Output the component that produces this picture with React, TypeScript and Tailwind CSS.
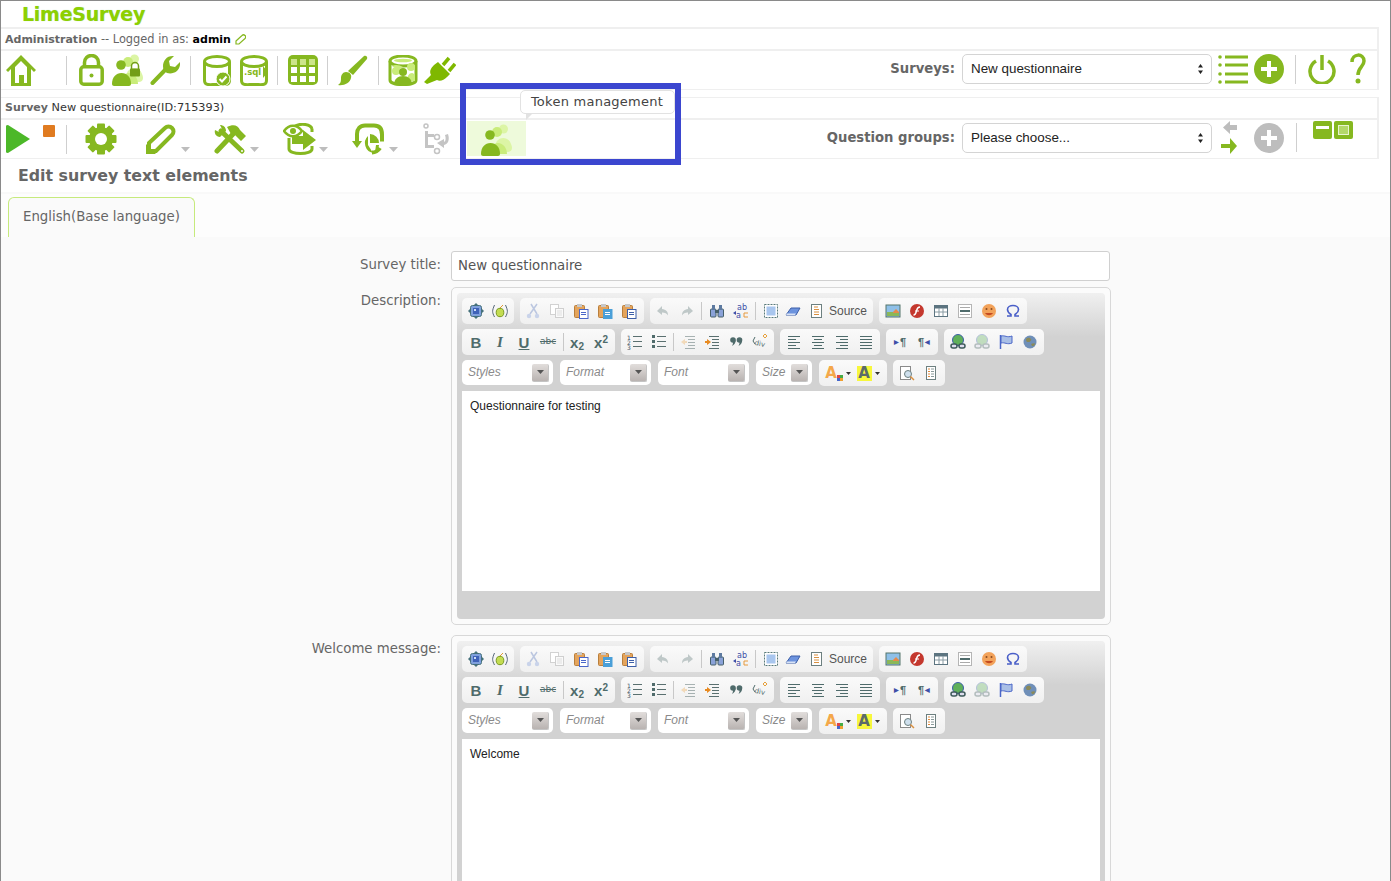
import React from "react";

const G = "#86b820";
const L = "#c9ec7a";
const P = "#dcf5a5";

type SP = { className?: string };
const Svg = ({ w, h, vb, className, children }: { w: number; h: number; vb?: string; className?: string; children: React.ReactNode }) => (
  <svg width={w} height={h} viewBox={vb ?? `0 0 ${w} ${h}`} className={"shrink-0 " + (className ?? "")}>{children}</svg>
);

const Sep = ({ className }: SP) => <div className={"w-px h-[29px] bg-[#cfcfcf] shrink-0 " + (className ?? "")} />;
const Caret = ({ className }: SP) => (
  <Svg w={9} h={5} className={"self-end mb-[6px] " + (className ?? "")}><path d="M0 0h9L4.500 5z" fill="#bdbdbd" /></Svg>
);

const Home = ({ className }: SP) => (
  <Svg w={32} h={32} className={className}>
    <path d="M16 1 31 16l-2 2-3-3v17H6V15l-3 3-2-2z M16 7 10 13v16h4v-8h5v8h3V13z" fill={G} fillRule="evenodd" />
  </Svg>
);
const Lock = ({ className }: SP) => (
  <Svg w={25} h={32} className={className}>
    <path d="M5.500 13V8.500a7 7 0 0 1 14 0V13" fill="none" stroke={G} strokeWidth="3.500" />
    <rect x="1.800" y="12.800" width="21.400" height="17.400" rx="3" fill="none" stroke={G} strokeWidth="3.500" />
    <circle cx="12.500" cy="21.500" r="2" fill={G} />
  </Svg>
);
const People = ({ className, lock }: SP & { lock?: boolean }) => (
  <Svg w={32} h={32} className={className}>
    <circle cx="22.500" cy="5" r="4.500" fill={P} />
    <path d="M16 27a8 8 0 1 1 14-7c2 4 1 8-3 8z" fill={P} />
    <circle cx="16" cy="8" r="5" fill={L} />
    <path d="M9 30c0-6 3-11 8-11s9 5 9 11z" fill={L} />
    <circle cx="9" cy="11" r="4.800" fill={G} />
    <path d="M0 30c0-7 4-11 9.500-11S19 23 19 30c0 1-1 2-2 2H2c-1 0-2-1-2-2z" fill={G} />
    {lock && (
      <g>
        <path d="M19.500 15v-3a3.500 3.500 0 0 1 7 0v3" fill="none" stroke="#739e18" strokeWidth="1.500" />
        <rect x="18" y="14.500" width="10" height="8" rx="1" fill="#739e18" />
      </g>
    )}
  </Svg>
);
const Wrench = ({ className }: SP) => (
  <Svg w={30} h={31} className={className}>
    <path d="M2.500 28 16 14" stroke={G} strokeWidth="4" strokeLinecap="round" />
    <path d="M14 16C11 9 15 0 24 1L19 6l1 5 5 1 5-5c1 8-6 13-13 11z" fill={G} />
  </Svg>
);
const Drum = ({ children, className }: { children?: React.ReactNode } & SP) => (
  <Svg w={28} h={31} className={className}>
    <path d="M1.500 7v18c0 6 4 4.500 12.500 4.500S26.500 31 26.500 25V7" fill="none" stroke={G} strokeWidth="3" />
    <ellipse cx="14" cy="6.500" rx="12.500" ry="5" fill="none" stroke={G} strokeWidth="3" />
    {children}
  </Svg>
);
const Grid3 = ({ className }: SP) => (
  <Svg w={30} h={30} className={className}>
    <rect width="30" height="30" rx="5" fill={G} />
    {[3, 12, 21].map((x) => [4, 12, 21].map((y) => (
      <rect key={x + "-" + y} x={x} y={y} width="6" height="6" fill={y === 4 ? "#cce58a" : "#fff"} />
    )))}
  </Svg>
);
const Brush = ({ className }: SP) => (
  <Svg w={30} h={31} className={className}>
    <path d="M26 1c2-1 4 1 3 3L15 20l-5-4z" fill={G} />
    <path d="M8 17c4 0 6 3 5 6-1 5-7 8-13 7 3-2 3-4 3-7 0-3 2-6 5-6z" fill={G} />
  </Svg>
);
const DbPeople = ({ className }: SP) => (
  <Svg w={30} h={31} className={className}>
    <path d="M2 6v19c0 6 26 6 26 0V6" fill="#fff" stroke={G} strokeWidth="3" />
    <ellipse cx="15" cy="6" rx="13" ry="5" fill="#fff" stroke={G} strokeWidth="3" />
    <ellipse cx="15" cy="5.500" rx="9" ry="1.800" fill={L} />
    <circle cx="23" cy="12" r="4" fill={L} />
    <circle cx="8" cy="16" r="4" fill={L} />
    <path d="M4 11c3-2 8-1 11 1l-5 3z" fill={L} />
    <path d="M19 27c0-6 2-9 5-9s3 4 3 8z" fill={L} />
    <circle cx="15" cy="17" r="4" fill={G} />
    <path d="M6 30c0-6 4-9 9-9s9 3 9 9c-5 1-13 1-18 0z" fill={G} />
  </Svg>
);
const Plug = ({ className }: SP) => (
  <Svg w={32} h={28} className={className}>
    <path d="M0 26 7 19C5 15 7 12 10 9L14 6 26 18l-3 3c-3 3-7 5-10 3l-10 4z" fill="#7fb800" />
    <path d="M19 9 25 2M25 15 31 8" stroke="#7fb800" strokeWidth="3.500" fill="none" />
  </Svg>
);
const ListIcon = ({ className }: SP) => (
  <Svg w={30} h={29} className={className}>
    {[2, 10, 19, 27].map((y) => <circle key={y} cx="2" cy={y} r="1.800" fill={G} />)}
    {[2, 10, 19, 27].map((y) => <rect key={"r" + y} x="7" y={y - 1.500} width="23" height="3" fill={G} />)}
  </Svg>
);
const PlusCircle = ({ c = G, className }: SP & { c?: string }) => (
  <Svg w={30} h={30} className={className}>
    <circle cx="15" cy="15" r="15" fill={c} />
    <path d="M13 7h4v6h6v4h-6v6h-4v-6H7v-4h6z" fill="#fff" />
  </Svg>
);
const Power = ({ className }: SP) => (
  <Svg w={28} h={30} className={className}>
    <path d="M8 7a12 12 0 1 0 12 0" fill="none" stroke={G} strokeWidth="3.500" />
    <path d="M14 1v15" stroke={G} strokeWidth="3.500" />
  </Svg>
);
const Help = ({ className }: SP) => (
  <Svg w={16} h={32} className={className}>
    <path d="M2 9c0-9 12-9 12-1 0 6-6 6-6 14" fill="none" stroke={G} strokeWidth="3.500" />
    <circle cx="8" cy="28" r="2.500" fill={G} />
  </Svg>
);
const Play = ({ className }: SP) => (
  <Svg w={24} h={28} className={className}><path d="M0 1q0-1 2-1l22 14L2 28q-2 0-2-1z" fill="#4cb828" /></Svg>
);
const Gear = ({ className }: SP) => (
  <Svg w={32} h={32} className={className}>
    {[0, 45, 90, 135].map((a) => <rect key={a} x="12" y="0.500" width="8" height="31" rx="1" fill={G} transform={`rotate(${a} 16 16)`} />)}
    <circle cx="16" cy="16" r="12" fill={G} />
    <circle cx="16" cy="16" r="6" fill="#fff" />
  </Svg>
);
const Pencil = ({ className }: SP) => (
  <Svg w={30} h={30} className={className}>
    <path d="M3 19 19 4c2-2 5-2 7 0s2 5 0 7L10 27H3z" fill="none" stroke={G} strokeWidth="4" />
    <path d="M0 20v10h10z" fill={G} />
  </Svg>
);
const Tools = ({ className }: SP) => (
  <Svg w={32} h={31} className={className}>
    <path d="M7 7 28 27" stroke={G} strokeWidth="5" strokeLinecap="round" />
    <path d="M1 6c-1 3 1 7 5 7l6-6c0-4-3-6-6-6L8 5 5 8z" fill={G} />
    <path d="M3 27 20 9" stroke={G} strokeWidth="5" strokeLinecap="round" />
    <path d="M13 3c6-3 11-2 13 3l6 6-5 5-6-6-4-1z" fill={G} />
    <circle cx="28" cy="27" r="1" fill="#fff" />
  </Svg>
);
const DbEye = ({ className }: SP) => (
  <Svg w={33} h={32} className={className}>
    <path d="M6 15v11c0 6 23 6 23 0v-3M29 9V6" fill="none" stroke={G} strokeWidth="3" />
    <path d="M1 8c5-7 13-7 18 0-5 7-13 7-18 0z" fill="#fff" stroke={G} strokeWidth="2.500" />
    <circle cx="10" cy="8" r="3" fill={G} />
    <path d="M12 3c6-3 16-2 17 3" fill="none" stroke={G} strokeWidth="3" />
    <path d="M9 13h11V7l13 10-13 10v-6H9z" fill={G} />
  </Svg>
);
const ChartIcon = ({ className }: SP) => (
  <Svg w={32} h={32} className={className}>
    <path d="M5 20V11C5 6 8 2.500 13 2.500h9c6 0 8 4 8 9v7M28 25c-2 3-5 4.500-8 4.500" fill="none" stroke={G} strokeWidth="4" />
    <path d="M0 18h10l-5 7z" fill={G} />
    <path d="M18 11v9h9a9 9 0 0 0-9-9z M16 13v9l5 8a10 10 0 0 1-5-17z M24 22l3 0a9 9 0 0 1-4 7z" fill={G} />
  </Svg>
);
const Tree = ({ className }: SP) => (
  <Svg w={27} h={32} className={className}>
    <g fill="none" stroke="#c4c4c4" strokeWidth="1.500">
      <circle cx="3" cy="3" r="2" />
      <circle cx="14" cy="14" r="2.500" />
      <circle cx="14" cy="28" r="2.500" />
    </g>
    <path d="M2 8h3v3h6v3H5v8h6v3H2z" fill="#c4c4c4" />
    <path d="M25 11c2 6 0 10-4 11v3l-7-5 7-4v3c2-1 2-4 1-7z" fill="#c4c4c4" />
  </Svg>
);
const Arrows = () => (
  <Svg w={17} h={33}>
    <path d="M9 0 2 6.500 9 13V9h7V4H9z" fill="#bdbdbd" />
    <path d="M9 17l7 8-7 8v-6H0v-4h9z" fill={G} />
  </Svg>
);
const Boxes = ({ className }: SP) => (
  <div className={"flex gap-[2px] items-start " + (className ?? "")}>
    <Svg w={19} h={18}><rect width="19" height="18" rx="2" fill={G} /><rect x="3" y="5" width="13" height="3" fill="#fff" /></Svg>
    <Svg w={19} h={18}><rect width="19" height="18" rx="2" fill={G} /><rect x="4.500" y="4.500" width="10" height="9" fill="#b4d86a" stroke="#e8f4d0" /></Svg>
  </div>
);
const PencilSmall = () => (
  <Svg w={11} h={11}><path d="M1 7 7 1.500c1-1 2-1 3 0s1 2 0 3L4 10H1z" fill="none" stroke={G} strokeWidth="1.200" /></Svg>
);

const Native = ({ value }: { value: string }) => (
  <div className="w-[250px] h-[30px] rounded-[5px] border border-[#d4d4d4] bg-white flex items-center justify-between pl-[8px] pr-[7px] shrink-0">
    <span className="text-[13.400px] text-[#222] font-['Liberation_Sans',sans-serif] pt-px">{value}</span>
    <Svg w={7} h={12}><path d="M3.500 1 6 4.500H1zM3.500 11 1 7.500h5z" fill="#222" /></Svg>
  </div>
);

/* --- editor icons --- */
const T = ({ children }: { children: React.ReactNode }) => <Svg w={16} h={16}>{children}</Svg>;
const slate = "#4f6b6b";
const lines = (ys: number[], x1: number[], x2: number[], c = slate) => ys.map((y, i) => (
  <rect key={y} x={x1[i % x1.length]} y={y} width={x2[i % x2.length] - x1[i % x1.length]} height="1" fill={c} />
));

const IcSave = () => <T><path d="M8 0l2 2H6zM8 16l-2-2h4zM0 8l2-2v4zM16 8l-2 2V6z" fill="#45707a" /><rect x="2.500" y="2.500" width="11" height="11" rx="2" fill="#7fa0dc" stroke="#45707a" /><rect x="5" y="5" width="6" height="6" fill="#3f62b8" /><rect x="6" y="6" width="2" height="2" fill="#cdddf6" /></T>;
const IcTpl = () => <T><path d="M2.500 2C0 8 0 9 2.500 14M13.500 2c2.500 6 2.500 7 0 12" fill="none" stroke="#567" /><ellipse cx="8" cy="9.500" rx="3.800" ry="4.200" fill="#c3dc52" stroke="#7a9a22" /><path d="M8 5l3-3" stroke="#e09a30" /></T>;
const IcCut = () => <T><path d="M12 1 5 11M6 1l6 10" stroke="#bcc7e0" strokeWidth="1.500" /><circle cx="4" cy="13" r="2.200" fill="#c9d3ea" /><circle cx="12" cy="13" r="2.200" fill="#c9d3ea" /></T>;
const IcCopy = () => <T><rect x="1.500" y="1.500" width="8" height="10" fill="#fff" stroke="#d2d2d2" /><rect x="6.500" y="5.500" width="8" height="9" fill="#fafafa" stroke="#cfcfcf" /><path d="M8 8h5M8 10h5M8 12h5" stroke="#dedede" /></T>;
const IcPaste = ({ c = "#4a66c8" }: { c?: string }) => <T><rect x="1.500" y="2.500" width="10" height="12" rx="1" fill="#e4a45c" stroke="#b97f3c" /><rect x="4" y="1" width="5" height="3" fill="#c8c8c8" /><rect x="6.500" y="6.500" width="8.500" height="9" fill={c === "#4a9fd8" ? c : "#fff"} stroke={c} /><rect x="8" y="9" width="5" height="1" fill={c === "#4a9fd8" ? "#fff" : c} /><rect x="8" y="11" width="5" height="1" fill={c === "#4a9fd8" ? "#fff" : c} /></T>;
const IcUndo = ({ flip }: { flip?: boolean }) => <T><path d={"M7 3 2 8l5 4V9.500c3 0 5 1 6 3 0-4-2-6-6-6.500z"} fill="#bfc8c8" transform={flip ? "matrix(-1 0 0 1 16 0)" : undefined} /></T>;
const IcFind = () => <T><rect x="1.500" y="6" width="5.500" height="8" rx="1" fill="#8aa2d8" stroke="#46606a" /><rect x="9" y="6" width="5.500" height="8" rx="1" fill="#8aa2d8" stroke="#46606a" /><rect x="3" y="2" width="3" height="5" fill="#5d7aa0" /><rect x="10" y="2" width="3" height="5" fill="#5d7aa0" /><rect x="6" y="7" width="4" height="3" fill="#46606a" /></T>;
const IcReplace = () => <T><text x="4" y="7" fontSize="8" fill="#3d4ea8" fontFamily="DejaVu Sans">ab</text><path d="M0 10l3-2v4z" fill="#3d4ea8" /><text x="3" y="15" fontSize="8" fill="#3d4ea8" fontFamily="DejaVu Sans">a</text><path d="M15 10h-4v4h4" fill="none" stroke="#e69a3c" /></T>;
const IcSelAll = () => <T><rect x="1.500" y="1.500" width="13" height="13" fill="#fff" stroke="#5a7a7a" strokeDasharray="2 1" /><rect x="3.500" y="3.500" width="9" height="9" fill="#a9c6ee" /></T>;
const IcErase = () => <T><path d="M1 12 6 5h9l-4 7z" fill="#6c93de" stroke="#3d5fa8" /><path d="M1 12h9l1-1.500H2z" fill="#d7e2f5" /></T>;
const IcSource = () => <T><rect x="2.500" y="1.500" width="10" height="13" fill="#fff" stroke="#6d8080" /><path d="M5 4h4M5 6.500h5M5 9h5M5 11.500h5" stroke="#d99040" /></T>;
const IcImg = () => <T><rect x="1" y="2" width="14" height="12" fill="#8fc0e8" stroke="#55756a" /><rect x="2" y="9" width="12" height="4" fill="#8ab858" /><path d="M8 9l3-3 3 3v1H8z" fill="#e58a4a" /></T>;
const IcFlash = () => <T><circle cx="8" cy="8" r="7" fill="#c4382e" /><path d="M11 4C8 4 8 6 7.500 8S6 12 4.500 12" stroke="#fff" strokeWidth="1.400" fill="none" /><path d="M6 8h4" stroke="#fff" /></T>;
const IcTable = () => <T><rect x="1.500" y="2.500" width="13" height="11" fill="#fff" stroke="#5c7480" /><rect x="2" y="3" width="12" height="2.500" fill="#5c7480" /><path d="M6 5v8M10 5v8M2 9h12" stroke="#8a9ca4" /></T>;
const IcHr = () => <T><rect x="1.500" y="1.500" width="13" height="13" fill="#fff" stroke="#b5b5b5" /><rect x="3" y="4" width="10" height="1" fill="#aaa" /><rect x="3" y="7" width="10" height="2" fill="#4f6b6b" /><rect x="3" y="11" width="10" height="1" fill="#aaa" /></T>;
const IcSmile = () => <T><circle cx="8" cy="8" r="7" fill="#f2a25a" /><circle cx="5.500" cy="6" r="1" fill="#8a4a20" /><circle cx="10.500" cy="6" r="1" fill="#8a4a20" /><path d="M4 10c2 3 6 3 8 0z" fill="#c44a20" /></T>;
const IcOmega = () => <T><path d="M2 13h4v-1.500C3.500 10 2.500 8.500 2.500 6.500 2.500 4 5 2.500 8 2.500S13.500 4 13.500 6.500c0 2-1 3.500-3.500 5V13h4" fill="none" stroke="#4a5fc8" strokeWidth="1.600" /></T>;
const IcB = ({ children, cls }: { children: React.ReactNode; cls?: string }) => (
  <span className={"text-[15px] leading-none font-bold text-[#4f6b6b] font-['Liberation_Sans',sans-serif] " + (cls ?? "")}>{children}</span>
);
const IcOl = () => <T><text x="0" y="6" fontSize="6" fill="#456">1</text><text x="0" y="11" fontSize="6" fill="#456">2</text><text x="0" y="16" fontSize="6" fill="#456">3</text>{lines([2, 7, 12], [6], [15], "#5a7070")}</T>;
const IcUl = () => <T>{[2, 7, 12].map((y) => <rect key={y} x="1" y={y - 1} width="3" height="3" fill={slate} />)}{lines([2, 7, 12], [6], [15], "#5a7070")}</T>;
const IcOut = ({ c, dim }: { c: string; dim?: boolean }) => <T><g opacity={dim ? 0.5 : 1}>{lines([2, 5, 8, 11, 14], [5, 8, 8, 8, 5], [15], "#5a7070")}<path d={dim ? "M1 8l4-3v2h2v2H5v2z" : "M7 8 3 5v2H1v2h2v2z"} fill={c} /></g></T>;
const IcQuote = () => <T><circle cx="5" cy="6" r="2.800" fill={slate} /><path d="M7.500 6C8 9 6 11 4 12c1-2 1-3 1-4z" fill={slate} /><circle cx="11.500" cy="6" r="2.800" fill={slate} /><path d="M14 6c.5 3-1.500 5-3.500 6 1-2 1-3 1-4z" fill={slate} /></T>;
const IcDiv = () => <T><path d="M3 3 1 7l2 3" fill="none" stroke="#4f6b6b" /><text x="3" y="12" fontSize="7" fill="#4f6b6b" fontFamily="DejaVu Sans" transform="rotate(12 8 8)">div</text><path d="M13 0l2 2-2 2-2-2z" fill="none" stroke="#e6a03c" /></T>;
const IcAlign = ({ kind }: { kind: string }) => {
  const x1 = kind === "c" ? [2, 4] : kind === "r" ? [2, 6] : [2];
  const x2 = kind === "l" ? [14, 10] : kind === "c" ? [14, 12] : [14];
  return <T>{lines([2, 5, 8, 11, 14], x1, x2)}</T>;
};
const IcBidi = ({ rtl }: { rtl?: boolean }) => (
  <span className="w-[16px] flex items-center justify-center text-[11px] font-bold text-[#4f6b6b] font-['Liberation_Sans',sans-serif]">
    {!rtl && <span className="text-[#3d4ea8] text-[6px] mr-px">▶</span>}¶{rtl && <span className="text-[#3d4ea8] text-[6px] ml-px">◀</span>}
  </span>
);
const IcLink = ({ dim }: { dim?: boolean }) => <T><g opacity={dim ? 0.35 : 1}><circle cx="8" cy="6" r="5.500" fill="#5fb05a" stroke="#3d5fa8" /><rect x="1" y="10" width="6" height="4" rx="2" fill="#dde" stroke="#3e5a5a" strokeWidth="1.500" /><rect x="9" y="10" width="6" height="4" rx="2" fill="#dde" stroke="#3e5a5a" strokeWidth="1.500" /></g></T>;
const IcFlag = () => <T><path d="M2.500 1v14" stroke="#4a66c8" strokeWidth="1.500" /><path d="M3 2c4-1 6 2 11 0v7c-5 2-7-1-11 0z" fill="#a9bfe6" stroke="#4a66c8" /></T>;
const IcGlobe = () => <T><circle cx="8" cy="8" r="6.500" fill="#6f8fb8" /><path d="M4 5c2-2 4-1 5 0s-1 3-2 3-3 1-3-3zM9 10c2-1 4-1 4 0s-2 3-3 2z" fill="#8a8a5a" /></T>;
const IcPreview = () => <T><rect x="1.500" y="1.500" width="10" height="13" fill="#fff" stroke="#8a8a8a" /><circle cx="9" cy="9" r="3.500" fill="#cfe0ee" stroke="#6d8080" /><path d="M11.500 11.500 15 15" stroke="#d99040" strokeWidth="1.500" /></T>;
const IcTemplates = () => <T><rect x="3.500" y="1.500" width="9" height="13" fill="#fff" stroke="#6d8080" /><path d="M8 4h3M8 6.500h3M8 9h3M8 11.500h3" stroke="#8a9a9a" /><path d="M5 4h2M5 6.500h2M5 9h2M5 11.500h2" stroke="#e08a3c" /></T>;
const IcA = ({ bg, c }: { bg?: string; c: string }) => (
  <span className="relative w-[15px] h-[15px] text-center text-[15px] leading-[15px] font-bold font-['DejaVu_Sans',sans-serif]" style={{ background: bg, color: c }}>A</span>
);
const SmallCaret = () => <Svg w={5} h={3} className="ml-[3px]"><path d="M0 0h5L2.500 3z" fill="#333" /></Svg>;

const Btn = ({ children, className }: { children: React.ReactNode } & SP) => <div className={"w-[24px] h-full flex items-center justify-center shrink-0 " + (className ?? "")}>{children}</div>;
const BarSep = ({ className }: SP) => <div className={"w-px h-[18px] bg-[#c8c8c8] shrink-0 " + (className ?? "")} />;
const Grp = ({ w, children }: { w: string; children: React.ReactNode }) => (
  <div className={"h-[26px] rounded-[5px] bg-gradient-to-b from-[#fafafa] to-[#f0f0f0] flex items-center shrink-0 " + w}>{children}</div>
);
const Combo = ({ label, w }: { label: string; w: string }) => (
  <div className={"h-[25px] rounded-[5px] bg-white flex items-center justify-between pl-[6px] pr-[4px] shrink-0 " + w}>
    <span className="text-[12px] italic text-[#8a8a8a] font-['Liberation_Sans',sans-serif] -mt-px">{label}</span>
    <span className="w-[17px] h-[18px] rounded-[2px] bg-gradient-to-b from-[#e2dedc] to-[#b9b3b1] border-r border-b border-[#c4c4c4] flex items-center justify-center">
      <Svg w={7} h={4}><path d="M0 0h7L3.500 4z" fill="#555" /></Svg>
    </span>
  </div>
);

const Editor = ({ text }: { text: string }) => (
  <div className="w-[660px] border border-[#d8d8d8] rounded-[5px] bg-[#fbfbfb] p-[5px]">
    <div className="rounded-[4px] bg-[#d2d2d2] bg-gradient-to-b from-[#f0f0f0] to-[#d2d2d2] bg-[length:100%_44px] bg-no-repeat">
      <div className="pt-[5px] pl-[5px] flex flex-col gap-[5px]">
        <div className="flex gap-[6px]">
          <Grp w="w-[52px] pl-[2px]"><Btn><IcSave /></Btn><Btn><IcTpl /></Btn></Grp>
          <Grp w="w-[124px] pl-[1px]"><Btn><IcCut /></Btn><Btn><IcCopy /></Btn><Btn><IcPaste /></Btn><Btn><IcPaste c="#4a9fd8" /></Btn><Btn><IcPaste c="#3d5fa8" /></Btn></Grp>
          <Grp w="w-[223px] pl-[1px]">
            <Btn><IcUndo /></Btn><Btn><IcUndo flip /></Btn><BarSep className="ml-[2px]" />
            <Btn className="ml-[3px]"><IcFind /></Btn><Btn><IcReplace /></Btn><BarSep className="ml-[2px]" />
            <Btn className="ml-[3px]"><IcSelAll /></Btn><Btn className="-ml-[2px]"><IcErase /></Btn>
            <Btn><IcSource /></Btn><span className="text-[12px] text-[#555] font-['Liberation_Sans',sans-serif]">Source</span>
          </Grp>
          <Grp w="w-[148px] pl-[2px]"><Btn><IcImg /></Btn><Btn><IcFlash /></Btn><Btn><IcTable /></Btn><Btn><IcHr /></Btn><Btn><IcSmile /></Btn><Btn><IcOmega /></Btn></Grp>
        </div>
        <div className="flex gap-[6px]">
          <Grp w="w-[153px] pl-[2px]">
            <Btn><IcB>B</IcB></Btn>
            <Btn><IcB cls="italic font-['Liberation_Serif',serif]">I</IcB></Btn>
            <Btn><IcB cls="underline">U</IcB></Btn>
            <Btn><span className="text-[9px] line-through text-[#4f6b6b] font-['DejaVu_Sans',sans-serif]">abc</span></Btn>
            <BarSep className="ml-[3px]" />
            <Btn className="ml-px"><IcB>x<sub className="text-[10px]">2</sub></IcB></Btn>
            <Btn><IcB>x<sup className="text-[10px]">2</sup></IcB></Btn>
          </Grp>
          <Grp w="w-[153px] pl-[2px]">
            <Btn><IcOl /></Btn><Btn><IcUl /></Btn><BarSep className="ml-[2px]" />
            <Btn className="ml-[2px]"><IcOut c="#f0c080" dim /></Btn><Btn><IcOut c="#e88a20" /></Btn><Btn><IcQuote /></Btn><Btn><IcDiv /></Btn>
          </Grp>
          <Grp w="w-[100px] pl-[2px]"><Btn><IcAlign kind="l" /></Btn><Btn><IcAlign kind="c" /></Btn><Btn><IcAlign kind="r" /></Btn><Btn><IcAlign kind="j" /></Btn></Grp>
          <Grp w="w-[52px] pl-[2px]"><Btn><IcBidi /></Btn><Btn><IcBidi rtl /></Btn></Grp>
          <Grp w="w-[100px] pl-[2px]"><Btn><IcLink /></Btn><Btn><IcLink dim /></Btn><Btn><IcFlag /></Btn><Btn><IcGlobe /></Btn></Grp>
        </div>
        <div className="flex gap-[7px]">
          <Combo label="Styles" w="w-[91px]" />
          <Combo label="Format" w="w-[91px]" />
          <Combo label="Font" w="w-[91px]" />
          <Combo label="Size" w="w-[56px]" />
          <Grp w="w-[68px] pl-[2px]">
            <div className="w-[32px] flex items-center justify-center"><IcA c="#f4a84a" /><Svg w={6} h={6} className="self-end -ml-[2px]"><rect x="0" width="3" height="3" fill="#d44" /><rect x="3" width="3" height="3" fill="#4a4" /><rect x="3" y="3" width="3" height="3" fill="#f0a030" /><rect x="0" y="3" width="3" height="3" fill="#46c" /></Svg><SmallCaret /></div>
            <div className="w-[30px] flex items-center justify-center"><IcA bg="#f7f73c" c="#5a6a6a" /><SmallCaret /></div>
          </Grp>
          <div className="-ml-px"><Grp w="w-[52px] pl-[2px]"><Btn><IcPreview /></Btn><Btn><IcTemplates /></Btn></Grp></div>
        </div>
      </div>
      <div className="mt-[5px] mx-[5px] h-[200px] bg-white px-[8px] pt-[6px] text-[12px] text-[#222] font-['Liberation_Sans',sans-serif]">{text}</div>
      <div className="h-[28px]" />
    </div>
  </div>
);

const Label = ({ children, pt }: { children: React.ReactNode; pt: string }) => (
  <div className={"w-[440px] text-right text-[13.300px] text-[#666] shrink-0 " + pt}>{children}</div>
);

export default function App() {
  return (
    <div className="relative h-[881px] overflow-hidden bg-white border-l border-t border-r border-[#8a8a8a] font-['DejaVu_Sans',sans-serif]">
      <div className="h-[26px] pl-[21px] flex items-center text-[19px] leading-none font-bold text-[#8ed000] tracking-[-0.25px] [text-shadow:0_0_1px_#a8d8b0]">LimeSurvey</div>

      <div className="border-t-2 border-[#efefef] border-r-2 border-r-[#efefef] mr-[11px] h-[22px] pl-[4px] pt-px flex items-center text-[11.400px] text-[#666] gap-[4px]">
        <span><b className="text-[11px]">Administration</b> -- Logged in as: <b className="text-black text-[11px]">admin</b></span>
        <PencilSmall />
      </div>
      <div className="border-t-2 border-[#efefef] border-b border-b-[#efefef] h-[41px] border-r-2 border-r-[#efefef] mr-[11px] flex items-center">
        <Home className="ml-[4px]" />
        <Sep className="ml-[29px]" />
        <Lock className="ml-[12px]" />
        <People className="ml-[8px]" lock />
        <Wrench className="ml-[6px]" />
        <Sep className="ml-[10px]" />
        <Drum className="ml-[12px]"><circle cx="20" cy="24" r="7" fill={G} stroke="#fff" strokeWidth="1" /><path d="M16.500 24l2.500 2.500 4.500-5" stroke="#fff" strokeWidth="2" fill="none" /></Drum>
        <Drum className="ml-[9px]"><text x="4" y="20" fontSize="8.500" fontWeight="bold" fill={G} fontFamily="DejaVu Sans">.sql</text><path d="M23 11l5 6-5 6z" fill={G} /></Drum>
        <Sep className="ml-[9px]" />
        <Grid3 className="ml-[10px]" />
        <Sep className="ml-[9px]" />
        <Brush className="ml-[10px]" />
        <Sep className="ml-[10px]" />
        <DbPeople className="ml-[9px]" />
        <Plug className="ml-[6px]" />
        <div className="ml-auto flex items-center self-start mt-[2px]">
          <span className="text-[13.200px] font-bold text-[#666] mr-[7px]">Surveys:</span>
          <Native value="New questionnaire" />
          <ListIcon className="ml-[6px]" />
          <PlusCircle className="ml-[6px]" />
          <Sep className="ml-[11px]" />
          <Power className="ml-[12px]" />
          <Help className="ml-[14px] mr-[11px]" />
        </div>
      </div>

      <div className="mt-[7px] border-t border-[#efefef] border-r-2 border-r-[#efefef] mr-[11px] h-[21px] pl-[4px] pt-px flex items-center text-[11.250px] text-[#333]">
        <span><b className="text-[#666] text-[11px]">Survey</b> New questionnaire(ID:715393)</span>
      </div>
      <div className="border-t-2 border-[#efefef] border-b border-b-[#efefef] border-r-2 border-r-[#efefef] mr-[11px] h-[41px] flex items-center">
        <Play className="ml-[5px]" />
        <div className="w-[12px] h-[12px] rounded-[1px] bg-[#e07b20] ml-[13px] self-start mt-[5px]" />
        <Sep className="ml-[11px]" />
        <Gear className="ml-[18px]" />
        <Pencil className="ml-[29px]" />
        <Caret className="ml-[5px]" />
        <Tools className="ml-[24px]" />
        <Caret className="ml-[4px]" />
        <DbEye className="ml-[24px]" />
        <Caret className="ml-[3px]" />
        <ChartIcon className="ml-[24px]" />
        <Caret className="ml-[5px]" />
        <Tree className="ml-[25px]" />
        <div className="ml-[17px] w-[59px] h-[35px] bg-[#eefadb] flex items-end pl-[14px] self-start mt-px">
          <People />
        </div>
        <div className="ml-auto flex items-center self-start mt-[1px]">
          <span className="text-[13.200px] font-bold text-[#666] mr-[7px]">Question groups:</span>
          <Native value="Please choose..." />
          <div className="ml-[9px]"><Arrows /></div>
          <PlusCircle c="#bdbdbd" className="ml-[16px]" />
          <Sep className="ml-[12px]" />
          <Boxes className="ml-[16px] mr-[24px] self-start" />
        </div>
      </div>

      <h1 className="h-[33px] pl-[17px] pt-px flex items-center text-[15.800px] font-bold text-[#666]">Edit survey text elements</h1>
      <div className="h-[45px] pl-[7px] border-t-2 border-[#f9f9f9] bg-[#fdfdfd] pt-[5px] flex items-end">
        <div className="w-[187px] h-[40px] rounded-t-[6px] border border-b-0 border-[#c6ea7c] bg-[#fafafa] pl-[14px] pt-[9px] text-[13.300px] text-[#666]">English(Base language)</div>
      </div>

      <div className="bg-[#fafafa] pt-[14px] flex flex-col h-[650px]">
        <div className="flex gap-[10px]">
          <Label pt="pt-[4px]">Survey title:</Label>
          <div className="w-[659px] h-[30px] rounded-[3px] border border-[#d0d0d0] bg-white pl-[6px] flex items-center text-[13.300px] text-[#555]">New questionnaire</div>
        </div>
        <div className="flex gap-[10px] mt-[6px]">
          <Label pt="pt-[4px]">Description:</Label>
          <Editor text="Questionnaire for testing" />
        </div>
        <div className="flex gap-[10px] mt-[10px]">
          <Label pt="pt-[4px]">Welcome message:</Label>
          <Editor text="Welcome" />
        </div>
      </div>

      <div className="absolute left-[459px] top-[82px] w-[221px] h-[82px] border-[6px] border-[#3b46cf]" />
      <div className="absolute left-[519px] top-[89px] w-[155px] h-[24px] rounded-[5px] border border-[#e2e2e2] bg-white flex items-center justify-center pr-px text-[13px] tracking-[0.25px] text-[#444]">
        Token management
        <span className="absolute left-[5px] -bottom-[7px] w-0 h-0 border-t-[7px] border-t-[#e2e2e2] border-r-[7px] border-r-transparent" />
      </div>
    </div>
  );
}
